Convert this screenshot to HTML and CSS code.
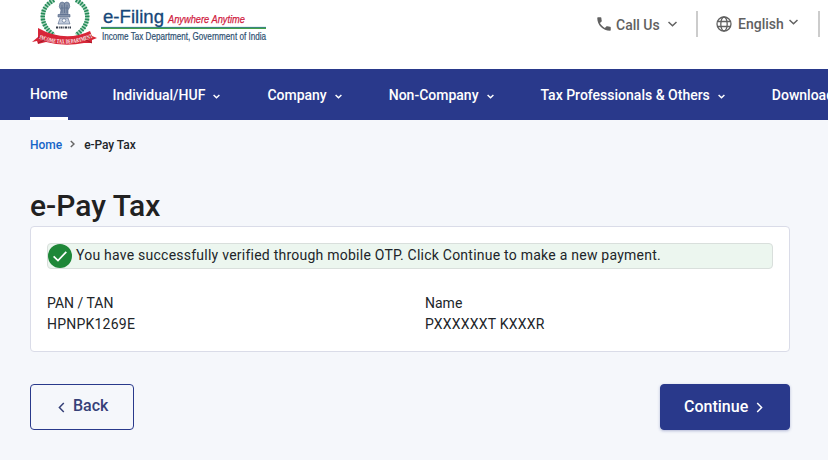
FILE: index.html
```html
<!DOCTYPE html>
<html lang="en">
<head>
<meta charset="utf-8">
<title>e-Pay Tax</title>
<link rel="stylesheet" href="styles.css">
</head>
<body>
<header class="topbar">
  <svg class="logo" width="240" height="50" viewBox="0 0 240 50" role="img" aria-label="e-Filing, Income Tax Department">
    <defs><path id="ribbon-line" d="M7 35.500Q35 48 65 34.500"/></defs>
    <path d="M24 0Q11 7 13 20Q15 29 24 35" fill="none" stroke="#a9d5bd" stroke-width="4"/>
    <path d="M46 0Q59 7 57 20Q55 29 46 35" fill="none" stroke="#a9d5bd" stroke-width="4"/>
    <path d="M24 0Q11 7 13 20Q15 29 24 35" fill="none" stroke="#238a58" stroke-width="4.5" stroke-dasharray="1.5 1.4"/>
    <path d="M46 0Q59 7 57 20Q55 29 46 35" fill="none" stroke="#238a58" stroke-width="4.5" stroke-dasharray="1.5 1.4"/>
    <g fill="#8795ac" stroke="#506588" stroke-width=".6">
      <path d="M30 3Q28 7 31 10L30 15H38L38 10Q41 7 39 3Q37 1 34.500 3Q32 1 30 3Z"/>
      <path d="M32 5V13M34.500 3V13M37 5V13M31 8H34M35 8H38" fill="none"/>
      <path d="M28 14.500H40V17H28Z"/>
      <path d="M30 18H38L40 24H28Z" fill="#c4cddd"/>
      <circle cx="34" cy="20.500" r="1.800" fill="#fff"/>
    </g>
    <path d="M26 27.500H41" stroke="#333b49" stroke-width="2" stroke-dasharray="2 .8 1 .7"/>
    <path d="M2 42L8 37L8 28Q35 43 60 31L62 36L67 38L62 40L62 43L54 43Q35 47 16 42L8 44L7 41Z" fill="#d72638"/>
    <path d="M8 37L15 40L8 43M62 36L54 39L62 43" fill="none" stroke="#8f1928" stroke-width=".8"/>
    <text class="ribbon" dy="2"><textPath href="#ribbon-line" startOffset="3" textLength="54" lengthAdjust="spacingAndGlyphs">INCOME TAX DEPARTMENT</textPath></text>
    <text class="brand" x="73" y="22.500" textLength="61" lengthAdjust="spacingAndGlyphs">e-Filing</text>
    <text class="tagline" x="138" y="22.500" textLength="77" lengthAdjust="spacingAndGlyphs">Anywhere Anytime</text>
    <path d="M71 27.400H236" stroke="#1f6f86" stroke-width="1"/>
    <path d="M71 28.400H236" stroke="#43a047" stroke-width="1.400"/>
    <text class="department" x="72" y="39.500" textLength="164" lengthAdjust="spacingAndGlyphs">Income Tax Department, Government of India</text>
  </svg>
  <div class="tools">
    <div class="tool call">
      <svg width="18" height="18" viewBox="0 0 24 24"><path fill="currentColor" d="M20 15.500c-1.200 0-2.500-.2-3.600-.6-.4-.1-.8 0-1 .2l-2.200 2.200c-2.800-1.400-5.200-3.800-6.600-6.600l2.200-2.200c.3-.3.4-.7.2-1-.3-1.100-.5-2.300-.5-3.500 0-.6-.4-1-1-1H4c-.6 0-1 .4-1 1 0 9.400 7.600 17 17 17 .6 0 1-.4 1-1v-3.500c0-.6-.4-1-1-1z"/></svg>
      <span class="call-text">Call Us</span>
      <svg class="call-arrow" width="9" height="6" viewBox="0 0 9 6"><path class="line" d="M.5 1L4.500 4.800L8.500 1"/></svg>
    </div>
    <div class="tool language">
      <svg width="16" height="16" viewBox="0 0 16 16"><g class="globe"><circle cx="8" cy="8" r="7"/><ellipse cx="8" cy="8" rx="3.200" ry="7"/><path d="M1.500 5.500H14.500M1.500 10.500H14.500"/></g></svg>
      <span class="language-text">English</span>
      <svg class="language-arrow" width="9" height="6" viewBox="0 0 9 6"><path class="line" d="M.5 1L4.500 4.800L8.500 1"/></svg>
    </div>
  </div>
</header>
<nav class="nav">
  <a class="active">Home</a>
  <a class="individual">Individual/HUF<svg width="7" height="5" viewBox="0 0 7 5"><path class="line" d="M.6 1L3.500 3.700L6.400 1"/></svg></a>
  <a>Company<svg width="7" height="5" viewBox="0 0 7 5"><path class="line" d="M.6 1L3.500 3.700L6.400 1"/></svg></a>
  <a>Non-Company<svg width="7" height="5" viewBox="0 0 7 5"><path class="line" d="M.6 1L3.500 3.700L6.400 1"/></svg></a>
  <a>Tax Professionals &amp; Others<svg width="7" height="5" viewBox="0 0 7 5"><path class="line" d="M.6 1L3.500 3.700L6.400 1"/></svg></a>
  <a>Downloads</a>
</nav>
<main>
  <div class="crumbs"><a>Home</a><svg width="5" height="8" viewBox="0 0 5 8"><path class="line" d="M.8 1L4 4L.8 7"/></svg><span>e-Pay Tax</span></div>
  <h1>e-Pay Tax</h1>
  <section class="card">
    <div class="notice">
      <svg width="24" height="24" viewBox="0 0 24 24"><circle cx="12" cy="12" r="12" fill="#1e8738"/><path d="M5.600 12.300L10 16.500L18.300 7.800" fill="none" stroke="#fff" stroke-width="1.700"/></svg>
      <span>You have successfully verified through mobile OTP. Click Continue to make a new payment.</span>
    </div>
    <div class="details">
      <div class="pan"><div>PAN / TAN</div><div class="value">HPNPK1269E</div></div>
      <div class="name"><div>Name</div><div class="value">PXXXXXXT KXXXR</div></div>
    </div>
  </section>
  <div class="actions">
    <button class="back"><svg width="7" height="11" viewBox="0 0 7 11"><path class="line" d="M5.800 1L1.400 5.500L5.800 10"/></svg><span>Back</span></button>
    <button class="continue"><span>Continue</span><svg width="7" height="11" viewBox="0 0 7 11"><path class="line" d="M1.200 1L5.600 5.500L1.200 10"/></svg></button>
  </div>
</main>
</body>
</html>
```

FILE: styles.css
```css
* { box-sizing: border-box; }
body { margin: 0; height: 460px; overflow: hidden; background: #f5f7fb; color: #212529; font-family: Roboto, sans-serif; }
svg { flex: none; }
.topbar { height: 69px; background: #fff; display: flex; justify-content: space-between; padding: 0 8px 0 30px; }
.logo { overflow: visible; }
.brand { font: 19px "Liberation Sans", sans-serif; fill: #164779; stroke: #164779; stroke-width: .3; }
.tagline { font: italic 11px "Liberation Sans", sans-serif; fill: #d0213f; stroke: #d0213f; stroke-width: .25; }
.department { font: 10.5px "Liberation Sans", sans-serif; fill: #2c4e70; stroke: #2c4e70; stroke-width: .2; }
.ribbon { font: bold 6px "Liberation Serif", serif; fill: #fff; }
.tools { display: flex; margin-top: 11px; height: 26px; color: #616161; font-size: 14px; line-height: 26px; font-weight: 500; }
.tool { display: flex; align-items: center; border-right: 2px solid #ccc; }
.call { width: 103px; }
.call-text { margin: 2px 0 0 3px; width: 44px; white-space: nowrap; }
.call-arrow { margin-left: 8px; }
.language { width: 122px; padding-left: 18px; }
.language-text { margin-left: 6px; width: 46px; }
.language-arrow { margin: -4px 0 0 5px; }
.line { fill: none; stroke: currentColor; stroke-width: 1.5; }
.globe { fill: none; stroke: currentColor; stroke-width: 1.3; }
.nav { height: 51px; padding-left: 30px; display: flex; background: #29398b; color: #fff; font-size: 14px; font-weight: 500; white-space: nowrap; gap: 48px; }
.nav a { display: flex; flex: none; align-items: center; }
.nav a svg { margin: 3px 0 0 8px; }
.nav a + a { margin-left: -1px; }
.nav .active { border-bottom: 3px solid #fff; padding-top: 2px; }
.nav .individual { margin-left: -3px; }
main { padding: 0 38px 0 30px; }
.crumbs { padding-top: 16px; height: 58px; line-height: 18px; font-size: 12px; font-weight: 500; display: flex; align-items: flex-start; }
.crumbs a { color: #1565c8; }
.crumbs svg { margin: 4px 9px 0 8px; color: #666; }
.crumbs span { letter-spacing: -.08px; }
h1 { margin: 8px 0 0; height: 40px; font-size: 30px; line-height: 40px; font-weight: 500; color: #212121; }
.card { height: 126px; border: 1px solid #dadce8; border-radius: 4px; background: #fff; padding: 16px; }
.notice { height: 26px; border: 1px solid #d9dfdc; border-radius: 4px; background: #ecf6ef; display: flex; align-items: center; font-size: 14px; }
.notice span { margin: -2px 0 0 4px; white-space: nowrap; letter-spacing: .24px; }
.details { display: grid; grid-template-columns: 1fr 1fr; column-gap: 30px; margin-top: 24px; font-size: 14px; line-height: 21px; }
.value { letter-spacing: .22px; }
.actions { display: flex; justify-content: space-between; margin-top: 32px; }
button { height: 46px; border: 1px solid #29398b; border-radius: 4px; font: 500 16px Roboto, sans-serif; display: flex; align-items: center; padding: 0; }
.back { width: 104px; padding: 0 0 3px 27px; background: transparent; color: #364078; gap: 8px; }
.back svg { margin-top: 4px; }
.continue { width: 130px; padding: 0 0 2px 23px; background: #29398b; color: #fff; gap: 8px; box-shadow: 0 1px 3px #29398b55; }
.continue svg { margin-top: 2px; }
```
